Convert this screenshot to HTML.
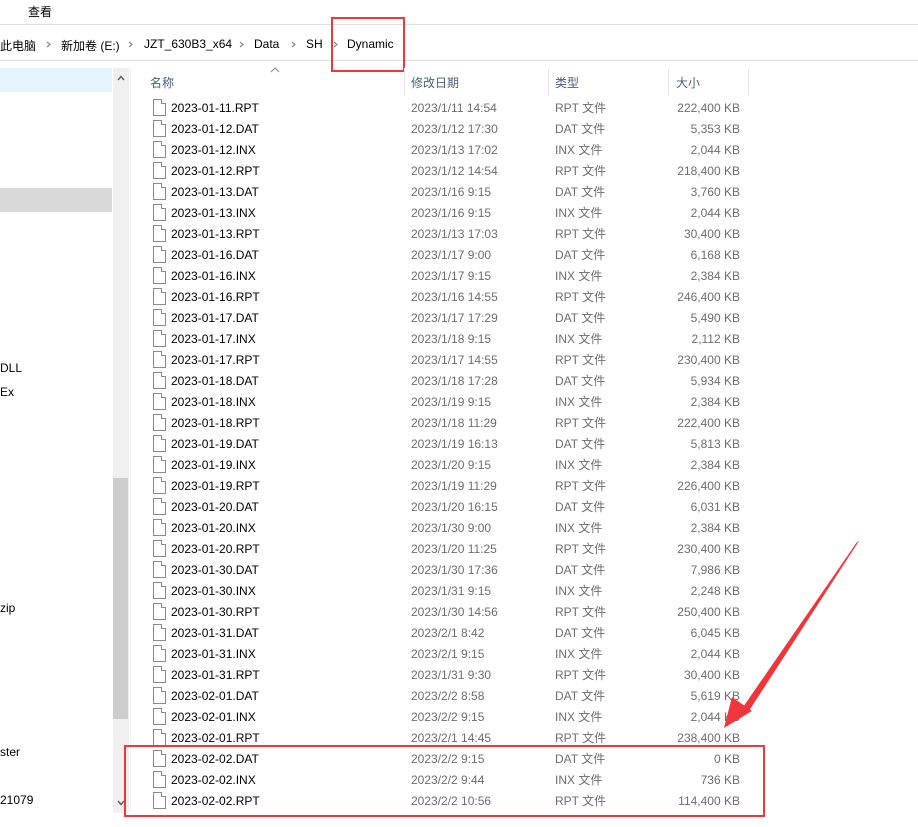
<!DOCTYPE html>
<html><head><meta charset="utf-8"><style>
*{margin:0;padding:0;box-sizing:border-box}
body{width:918px;height:827px;background:#fff;position:relative;overflow:hidden;font-family:"Liberation Sans","Noto Sans CJK SC",sans-serif;font-size:12px;color:#000}
.a{position:absolute;white-space:nowrap}
.row{position:absolute;left:131px;width:620px;height:21px}
.row .ic{position:absolute;left:22px;top:2px;width:13px;height:17px;border:1px solid #8a8a8a;background:#fff}
.row .ic:after{content:"";position:absolute;right:-1px;top:-1px;width:4px;height:4px;background:#fff;border-left:1px solid #8a8a8a;border-bottom:1px solid #8a8a8a}
.row span{position:absolute;top:4px;line-height:15px}
.n{left:40px;color:#000}
.d{left:280px;color:#6d6d6d}
.t{left:424px;color:#6d6d6d}
.s{right:11px;color:#6d6d6d;text-align:right}
.sep{position:absolute;top:68px;width:1px;height:27px;background:#e5e5e5}
.h{position:absolute;top:74px;color:#4c607a;font-size:12px}
.crumb{position:absolute;top:37px;font-size:12px}
.chev{position:absolute;top:41px}
</style></head><body>
<div class="a" style="left:28px;top:3px">查看</div>
<div class="a" style="left:0;top:24px;width:918px;height:1px;background:#e0e0e0"></div>
<div class="a" style="left:0;top:60px;width:918px;height:1px;background:#e0e0e0"></div>
<div class="crumb" style="left:0">此电脑</div>
<svg class="chev" style="left:46px" width="5" height="7"><path d="M1 1 L4 3.5 L1 6" fill="none" stroke="#888" stroke-width="1.2"/></svg>
<div class="crumb" style="left:61px">新加卷 (E:)</div>
<svg class="chev" style="left:128px" width="5" height="7"><path d="M1 1 L4 3.5 L1 6" fill="none" stroke="#888" stroke-width="1.2"/></svg>
<div class="crumb" style="left:144px">JZT_630B3_x64</div>
<svg class="chev" style="left:239px" width="5" height="7"><path d="M1 1 L4 3.5 L1 6" fill="none" stroke="#888" stroke-width="1.2"/></svg>
<div class="crumb" style="left:254px">Data</div>
<svg class="chev" style="left:291px" width="5" height="7"><path d="M1 1 L4 3.5 L1 6" fill="none" stroke="#888" stroke-width="1.2"/></svg>
<div class="crumb" style="left:306px">SH</div>
<svg class="chev" style="left:333px" width="5" height="7"><path d="M1 1 L4 3.5 L1 6" fill="none" stroke="#888" stroke-width="1.2"/></svg>
<div class="crumb" style="left:347px">Dynamic</div>
<div class="a" style="left:331px;top:17px;width:74px;height:55px;border:2px solid #f0363a"></div>

<div class="a" style="left:0;top:68px;width:112px;height:24px;background:#e5f3fe"></div>
<div class="a" style="left:0;top:188px;width:112px;height:24px;background:#d9d9d9"></div>
<div class="a" style="left:0;top:361px">DLL</div>
<div class="a" style="left:0;top:385px">Ex</div>
<div class="a" style="left:0;top:601px">zip</div>
<div class="a" style="left:0;top:745px">ster</div>
<div class="a" style="left:0;top:793px">21079</div>
<div class="a" style="left:113px;top:68px;width:16px;height:745px;background:#f0f0f0"></div>
<div class="a" style="left:113px;top:478px;width:15px;height:241px;background:#cdcdcd"></div>
<svg class="a" style="left:117px;top:75px" width="8" height="6"><path d="M1 5 L4 1.5 L7 5" fill="none" stroke="#606060" stroke-width="1.5"/></svg>
<svg class="a" style="left:117px;top:800px" width="8" height="6"><path d="M1 1 L4 4.5 L7 1" fill="none" stroke="#606060" stroke-width="1.5"/></svg>
<div class="a" style="left:130px;top:68px;width:1px;height:745px;background:#f3f3f3"></div>

<svg class="a" style="left:270px;top:67px" width="10" height="6"><path d="M1 5 L5 1 L9 5" fill="none" stroke="#888" stroke-width="1"/></svg>
<div class="h" style="left:150px">名称</div>
<div class="sep" style="left:404px"></div><div class="h" style="left:411px">修改日期</div>
<div class="sep" style="left:548px"></div><div class="h" style="left:555px">类型</div>
<div class="sep" style="left:668px"></div><div class="h" style="left:676px">大小</div>
<div class="sep" style="left:748px"></div>

<div class="row" style="top:97px"><i class="ic"></i><span class="n">2023-01-11.RPT</span><span class="d">2023/1/11 14:54</span><span class="t">RPT 文件</span><span class="s">222,400 KB</span></div>
<div class="row" style="top:118px"><i class="ic"></i><span class="n">2023-01-12.DAT</span><span class="d">2023/1/12 17:30</span><span class="t">DAT 文件</span><span class="s">5,353 KB</span></div>
<div class="row" style="top:139px"><i class="ic"></i><span class="n">2023-01-12.INX</span><span class="d">2023/1/13 17:02</span><span class="t">INX 文件</span><span class="s">2,044 KB</span></div>
<div class="row" style="top:160px"><i class="ic"></i><span class="n">2023-01-12.RPT</span><span class="d">2023/1/12 14:54</span><span class="t">RPT 文件</span><span class="s">218,400 KB</span></div>
<div class="row" style="top:181px"><i class="ic"></i><span class="n">2023-01-13.DAT</span><span class="d">2023/1/16 9:15</span><span class="t">DAT 文件</span><span class="s">3,760 KB</span></div>
<div class="row" style="top:202px"><i class="ic"></i><span class="n">2023-01-13.INX</span><span class="d">2023/1/16 9:15</span><span class="t">INX 文件</span><span class="s">2,044 KB</span></div>
<div class="row" style="top:223px"><i class="ic"></i><span class="n">2023-01-13.RPT</span><span class="d">2023/1/13 17:03</span><span class="t">RPT 文件</span><span class="s">30,400 KB</span></div>
<div class="row" style="top:244px"><i class="ic"></i><span class="n">2023-01-16.DAT</span><span class="d">2023/1/17 9:00</span><span class="t">DAT 文件</span><span class="s">6,168 KB</span></div>
<div class="row" style="top:265px"><i class="ic"></i><span class="n">2023-01-16.INX</span><span class="d">2023/1/17 9:15</span><span class="t">INX 文件</span><span class="s">2,384 KB</span></div>
<div class="row" style="top:286px"><i class="ic"></i><span class="n">2023-01-16.RPT</span><span class="d">2023/1/16 14:55</span><span class="t">RPT 文件</span><span class="s">246,400 KB</span></div>
<div class="row" style="top:307px"><i class="ic"></i><span class="n">2023-01-17.DAT</span><span class="d">2023/1/17 17:29</span><span class="t">DAT 文件</span><span class="s">5,490 KB</span></div>
<div class="row" style="top:328px"><i class="ic"></i><span class="n">2023-01-17.INX</span><span class="d">2023/1/18 9:15</span><span class="t">INX 文件</span><span class="s">2,112 KB</span></div>
<div class="row" style="top:349px"><i class="ic"></i><span class="n">2023-01-17.RPT</span><span class="d">2023/1/17 14:55</span><span class="t">RPT 文件</span><span class="s">230,400 KB</span></div>
<div class="row" style="top:370px"><i class="ic"></i><span class="n">2023-01-18.DAT</span><span class="d">2023/1/18 17:28</span><span class="t">DAT 文件</span><span class="s">5,934 KB</span></div>
<div class="row" style="top:391px"><i class="ic"></i><span class="n">2023-01-18.INX</span><span class="d">2023/1/19 9:15</span><span class="t">INX 文件</span><span class="s">2,384 KB</span></div>
<div class="row" style="top:412px"><i class="ic"></i><span class="n">2023-01-18.RPT</span><span class="d">2023/1/18 11:29</span><span class="t">RPT 文件</span><span class="s">222,400 KB</span></div>
<div class="row" style="top:433px"><i class="ic"></i><span class="n">2023-01-19.DAT</span><span class="d">2023/1/19 16:13</span><span class="t">DAT 文件</span><span class="s">5,813 KB</span></div>
<div class="row" style="top:454px"><i class="ic"></i><span class="n">2023-01-19.INX</span><span class="d">2023/1/20 9:15</span><span class="t">INX 文件</span><span class="s">2,384 KB</span></div>
<div class="row" style="top:475px"><i class="ic"></i><span class="n">2023-01-19.RPT</span><span class="d">2023/1/19 11:29</span><span class="t">RPT 文件</span><span class="s">226,400 KB</span></div>
<div class="row" style="top:496px"><i class="ic"></i><span class="n">2023-01-20.DAT</span><span class="d">2023/1/20 16:15</span><span class="t">DAT 文件</span><span class="s">6,031 KB</span></div>
<div class="row" style="top:517px"><i class="ic"></i><span class="n">2023-01-20.INX</span><span class="d">2023/1/30 9:00</span><span class="t">INX 文件</span><span class="s">2,384 KB</span></div>
<div class="row" style="top:538px"><i class="ic"></i><span class="n">2023-01-20.RPT</span><span class="d">2023/1/20 11:25</span><span class="t">RPT 文件</span><span class="s">230,400 KB</span></div>
<div class="row" style="top:559px"><i class="ic"></i><span class="n">2023-01-30.DAT</span><span class="d">2023/1/30 17:36</span><span class="t">DAT 文件</span><span class="s">7,986 KB</span></div>
<div class="row" style="top:580px"><i class="ic"></i><span class="n">2023-01-30.INX</span><span class="d">2023/1/31 9:15</span><span class="t">INX 文件</span><span class="s">2,248 KB</span></div>
<div class="row" style="top:601px"><i class="ic"></i><span class="n">2023-01-30.RPT</span><span class="d">2023/1/30 14:56</span><span class="t">RPT 文件</span><span class="s">250,400 KB</span></div>
<div class="row" style="top:622px"><i class="ic"></i><span class="n">2023-01-31.DAT</span><span class="d">2023/2/1 8:42</span><span class="t">DAT 文件</span><span class="s">6,045 KB</span></div>
<div class="row" style="top:643px"><i class="ic"></i><span class="n">2023-01-31.INX</span><span class="d">2023/2/1 9:15</span><span class="t">INX 文件</span><span class="s">2,044 KB</span></div>
<div class="row" style="top:664px"><i class="ic"></i><span class="n">2023-01-31.RPT</span><span class="d">2023/1/31 9:30</span><span class="t">RPT 文件</span><span class="s">30,400 KB</span></div>
<div class="row" style="top:685px"><i class="ic"></i><span class="n">2023-02-01.DAT</span><span class="d">2023/2/2 8:58</span><span class="t">DAT 文件</span><span class="s">5,619 KB</span></div>
<div class="row" style="top:706px"><i class="ic"></i><span class="n">2023-02-01.INX</span><span class="d">2023/2/2 9:15</span><span class="t">INX 文件</span><span class="s">2,044 KB</span></div>
<div class="row" style="top:727px"><i class="ic"></i><span class="n">2023-02-01.RPT</span><span class="d">2023/2/1 14:45</span><span class="t">RPT 文件</span><span class="s">238,400 KB</span></div>
<div class="row" style="top:748px"><i class="ic"></i><span class="n">2023-02-02.DAT</span><span class="d">2023/2/2 9:15</span><span class="t">DAT 文件</span><span class="s">0 KB</span></div>
<div class="row" style="top:769px"><i class="ic"></i><span class="n">2023-02-02.INX</span><span class="d">2023/2/2 9:44</span><span class="t">INX 文件</span><span class="s">736 KB</span></div>
<div class="row" style="top:790px"><i class="ic"></i><span class="n">2023-02-02.RPT</span><span class="d">2023/2/2 10:56</span><span class="t">RPT 文件</span><span class="s">114,400 KB</span></div>

<div class="a" style="left:124px;top:745px;width:641px;height:72px;border:2px solid #f0363a"></div>
<svg class="a" style="left:0;top:0" width="918" height="827">
<polygon points="859,541 857,542 741,710 747,714" fill="#f0363a"/>
<polygon points="724,728 732,697 752,711" fill="#f0363a"/>
</svg>
</body></html>
